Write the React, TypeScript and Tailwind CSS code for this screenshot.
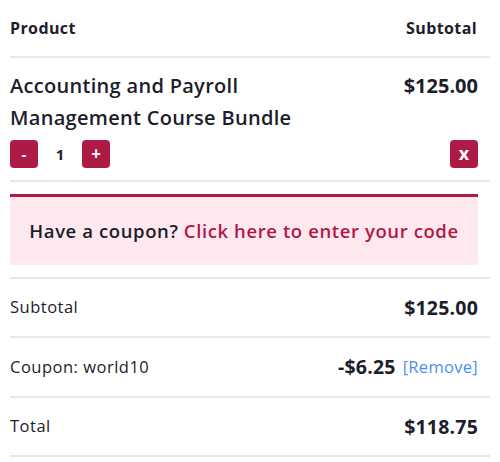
import React from "react";

export default function App() {
  const font = { fontFamily: "'Open Sans', 'Noto Sans', sans-serif" };
  return (
    <div className="w-[500px] h-[462px] bg-white text-[#1d1d2b]" style={font}>
      <div className="pl-[10px] pr-[10px]">
        <div className="flex justify-between items-center h-[58px] pr-[13px] border-b-2 border-[#e8e8e8] text-[16px] font-bold tracking-[0.4px]">
          <span>Product</span>
          <span>Subtotal</span>
        </div>
        <div className="border-b-2 border-[#e8e8e8] pt-[12px] pb-[12px] pr-[12px]">
          <div className="flex justify-between">
            <div className="text-[20px] font-semibold leading-[32px] tracking-[0.3px]">
              Accounting and Payroll
              <br />
              Management Course Bundle
            </div>
            <div className="text-[20px] font-bold leading-[32px]">$125.00</div>
          </div>
          <div className="flex justify-between items-center mt-[6px]">
            <div className="flex items-center">
              <button className="w-[28px] h-[28px] rounded-[4px] bg-[#ad1a45] text-white font-bold text-[15px] flex items-center justify-center">-</button>
              <span className="w-[44px] text-center text-[15px] font-bold">1</span>
              <button className="w-[28px] h-[28px] rounded-[4px] bg-[#ad1a45] text-white font-bold text-[17px] flex items-center justify-center">+</button>
            </div>
            <button className="w-[28px] h-[28px] rounded-[4px] bg-[#ad1a45] text-white font-bold text-[18px] flex items-center justify-center leading-none pb-[2px]">x</button>
          </div>
        </div>
        <div className="pt-[12px] pb-[12px] pr-[12px] border-b-2 border-[#e8e8e8]">
          <div className="bg-[#fde8ee] border-t-[3px] border-[#ad1a45] h-[71px] flex items-center justify-center text-[18.5px] font-semibold tracking-[0.6px]">
            <span>Have a coupon?&nbsp;</span>
            <span className="text-[#b3174a]">Click here to enter your code</span>
          </div>
        </div>
        <div className="flex justify-between items-center h-[59px] pr-[12px] border-b-2 border-[#e8e8e8]">
          <span className="text-[16.5px] tracking-[0.5px]">Subtotal</span>
          <span className="text-[19.5px] font-bold tracking-[0.2px]">$125.00</span>
        </div>
        <div className="flex justify-between items-center h-[60px] pr-[12px] border-b-2 border-[#e8e8e8]">
          <span className="text-[16.5px] tracking-[0.5px]">Coupon: world10</span>
          <span className="flex items-center gap-[7px]">
            <span className="text-[19.5px] font-bold tracking-[0.2px]">-$6.25</span>
            <span className="text-[16.5px] tracking-[0.3px] text-[#4d8ef5]">[Remove]</span>
          </span>
        </div>
        <div className="flex justify-between items-center h-[59px] pr-[12px] border-b-2 border-[#e8e8e8]">
          <span className="text-[16.5px] tracking-[0.5px]">Total</span>
          <span className="text-[19.5px] font-bold tracking-[0.2px]">$118.75</span>
        </div>
      </div>
    </div>
  );
}
